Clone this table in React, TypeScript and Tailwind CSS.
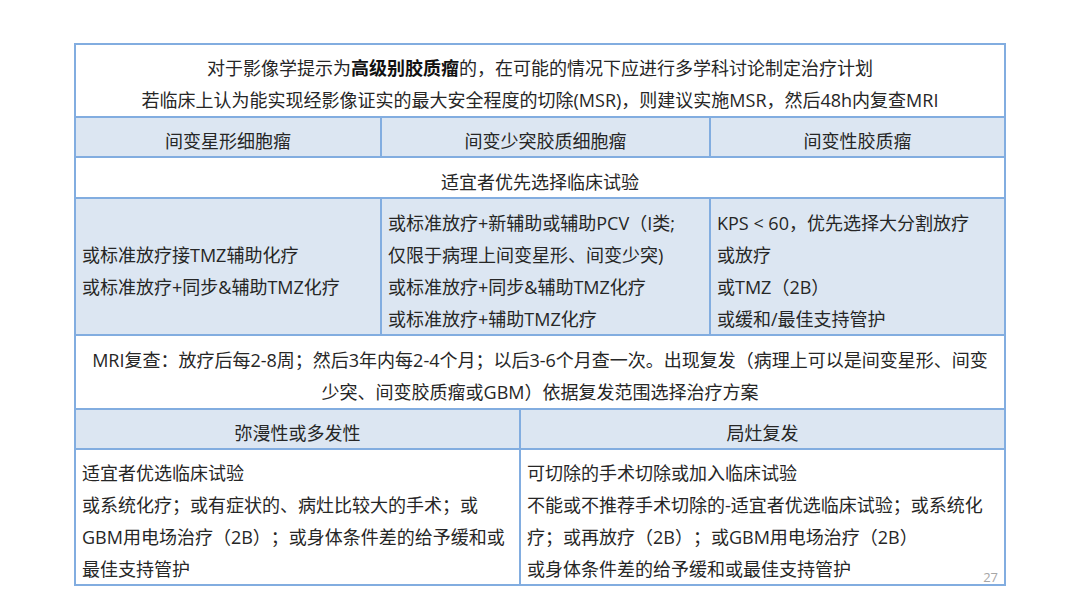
const font = { fontFamily: '"Open Sans", "Noto Sans CJK SC", sans-serif' };

const Lines = ({ lines }: { lines: string[] }) => (
  <div>
    {lines.map((l) => (
      <div key={l} className="whitespace-nowrap">
        {l}
      </div>
    ))}
  </div>
);

export default function App() {
  return (
    <div
      className="h-[608px] w-[1080px] bg-white pl-[74px] pt-[43px] text-[18px] leading-[32px] text-[#262626] [text-spacing-trim:space-all]"
      style={font}
    >
      <div className="relative w-[932px] border-2 border-[#82ade0]">
        {/* title */}
        <div className="flex h-[71px] flex-col items-center justify-center pt-[7px] text-center">
          <div className="whitespace-nowrap">
            对于影像学提示为<span className="font-bold text-[#111]">高级别胶质瘤</span>
            的，在可能的情况下应进行多学科讨论制定治疗计划
          </div>
          <div className="whitespace-nowrap">
            若临床上认为能实现经影像证实的最大安全程度的切除(MSR)，则建议实施MSR，然后48h内复查MRI
          </div>
        </div>

        {/* headers */}
        <div className="flex h-[40px] border-t-2 border-[#82ade0] bg-[#dce6f2]">
          <div className="flex w-[304px] shrink-0 items-center justify-center pt-2">间变星形细胞瘤</div>
          <div className="flex w-[329px] shrink-0 items-center justify-center border-l-2 border-[#82ade0] pt-2">
            间变少突胶质细胞瘤
          </div>
          <div className="flex w-[295px] shrink-0 items-center justify-center border-l-2 border-[#82ade0] pt-2">
            间变性胶质瘤
          </div>
        </div>

        <div className="flex h-[41px] items-center justify-center border-t-2 border-[#82ade0] pt-2">
          适宜者优先选择临床试验
        </div>

        <div className="flex h-[137px] border-t-2 border-[#82ade0] bg-[#dce6f2]">
          <div className="flex w-[304px] shrink-0 items-center pl-[6px] pt-2">
            <Lines lines={["或标准放疗接TMZ辅助化疗", "或标准放疗+同步&辅助TMZ化疗"]} />
          </div>
          <div className="flex w-[329px] shrink-0 items-center border-l-2 border-[#82ade0] pl-[6px] pt-2">
            <Lines
              lines={[
                "或标准放疗+新辅助或辅助PCV（I类;",
                "仅限于病理上间变星形、间变少突)",
                "或标准放疗+同步&辅助TMZ化疗",
                "或标准放疗+辅助TMZ化疗",
              ]}
            />
          </div>
          <div className="flex w-[295px] shrink-0 items-center border-l-2 border-[#82ade0] pl-[6px] pt-2">
            <Lines lines={["KPS < 60，优先选择大分割放疗", "或放疗", "或TMZ（2B）", "或缓和/最佳支持管护"]} />
          </div>
        </div>

        <div className="flex h-[74px] flex-col items-center justify-center border-t-2 border-[#82ade0] pt-2 text-center">
          <div className="whitespace-nowrap">
            MRI复查：放疗后每2-8周；然后3年内每2-4个月；以后3-6个月查一次。出现复发（病理上可以是间变星形、间变
          </div>
          <div className="whitespace-nowrap">少突、间变胶质瘤或GBM）依据复发范围选择治疗方案</div>
        </div>

        <div className="flex h-[40px] border-t-2 border-[#82ade0] bg-[#dce6f2]">
          <div className="flex w-[443px] shrink-0 items-center justify-center pt-2">弥漫性或多发性</div>
          <div className="flex w-[485px] shrink-0 items-center justify-center border-l-2 border-[#82ade0] pt-2">
            局灶复发
          </div>
        </div>

        <div className="flex h-[136px] border-t-2 border-[#82ade0]">
          <div className="flex w-[443px] shrink-0 items-center pl-[6px] pt-2">
            <Lines
              lines={[
                "适宜者优选临床试验",
                "或系统化疗；或有症状的、病灶比较大的手术；或",
                "GBM用电场治疗（2B）；或身体条件差的给予缓和或",
                "最佳支持管护",
              ]}
            />
          </div>
          <div className="flex w-[485px] shrink-0 items-center border-l-2 border-[#82ade0] pl-[6px] pt-2">
            <Lines
              lines={[
                "可切除的手术切除或加入临床试验",
                "不能或不推荐手术切除的-适宜者优选临床试验；或系统化",
                "疗；或再放疗（2B）；或GBM用电场治疗（2B）",
                "或身体条件差的给予缓和或最佳支持管护",
              ]}
            />
          </div>
        </div>

        <span className="absolute bottom-[-3px] right-[6px] text-[13px] leading-[20px] text-[#a6a6a6]">27</span>
      </div>
    </div>
  );
}
